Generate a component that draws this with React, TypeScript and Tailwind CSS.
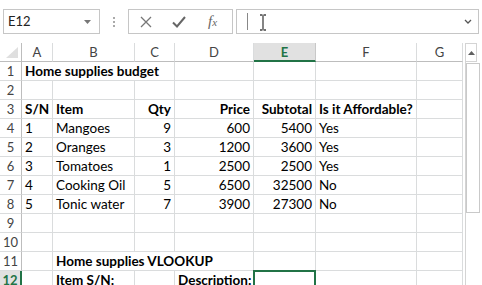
import type { ReactNode } from "react";

type CellDef = {
  text?: string;
  right?: boolean;
  bold?: boolean;
  span?: number;
  selected?: boolean;
};

const columns = ["A", "B", "C", "D", "E", "F", "G"];

const rows: CellDef[][] = [
  [{ text: "Home supplies budget", bold: true, span: 3 }, {}, {}, {}, {}],
  [{}, {}, {}, {}, {}, {}, {}],
  [
    { text: "S/N", bold: true },
    { text: "Item", bold: true },
    { text: "Qty", bold: true, right: true },
    { text: "Price", bold: true, right: true },
    { text: "Subtotal", bold: true, right: true },
    { text: "Is it Affordable?", bold: true },
    {},
  ],
  [{ text: "1" }, { text: "Mangoes" }, { text: "9", right: true }, { text: "600", right: true }, { text: "5400", right: true }, { text: "Yes" }, {}],
  [{ text: "2" }, { text: "Oranges" }, { text: "3", right: true }, { text: "1200", right: true }, { text: "3600", right: true }, { text: "Yes" }, {}],
  [{ text: "3" }, { text: "Tomatoes" }, { text: "1", right: true }, { text: "2500", right: true }, { text: "2500", right: true }, { text: "Yes" }, {}],
  [{ text: "4" }, { text: "Cooking Oil" }, { text: "5", right: true }, { text: "6500", right: true }, { text: "32500", right: true }, { text: "No" }, {}],
  [{ text: "5" }, { text: "Tonic water" }, { text: "7", right: true }, { text: "3900", right: true }, { text: "27300", right: true }, { text: "No" }, {}],
  [{}, {}, {}, {}, {}, {}, {}],
  [{}, {}, {}, {}, {}, {}, {}],
  [{}, { text: "Home supplies VLOOKUP", bold: true, span: 3 }, {}, {}, {}],
  [{}, { text: "Item S/N:", bold: true }, {}, { text: "Description:", bold: true }, { selected: true }, {}, {}],
];

function Cell({ cell }: { cell: CellDef }) {
  const span = cell.span === 3 ? "col-span-3" : "";
  return (
    <div
      className={`relative h-[19px] border-r border-b border-[#dadcdd] whitespace-nowrap leading-[18px] ${span} ${
        cell.right ? "text-right pr-[3px]" : "pl-[3px]"
      } ${cell.bold ? "font-bold" : ""}`}
    >
      {cell.text}
      {cell.selected && <div className="absolute -left-px -top-px right-[-1px] bottom-0 border-2 border-[#217346]" />}
    </div>
  );
}

function Box({ className, children }: { className: string; children?: ReactNode }) {
  return <div className={`h-[25px] border border-[#c6c6c6] bg-white flex items-center ${className}`}>{children}</div>;
}

export default function App() {
  return (
    <div className="w-[482px] h-[285px] overflow-hidden bg-white text-[#000] font-['Lato',sans-serif] text-[13.5px]">
      {/* formula bar */}
      <div className="h-[43px] flex items-start pt-[9px] pl-[3px]">
        <Box className="w-[97px] pl-[4px] pr-[8px] justify-between text-[13px] text-[#222]">
          <span>E12</span>
          <svg width="7" height="4" viewBox="0 0 7 4">
            <path d="M0 0h7L3.5 4z" fill="#777" />
          </svg>
        </Box>
        <div className="w-[28px] h-[25px] flex flex-col items-center justify-center gap-[2px]">
          <span className="w-[2px] h-[2px] bg-[#aaa]" />
          <span className="w-[2px] h-[2px] bg-[#aaa]" />
          <span className="w-[2px] h-[2px] bg-[#aaa]" />
        </div>
        <Box className="w-[105px] pl-[11px] gap-[20px]">
          <svg width="12" height="12" viewBox="0 0 12 12">
            <path d="M1 1l10 10M11 1L1 11" stroke="#777" strokeWidth="1.3" />
          </svg>
          <svg width="14" height="12" viewBox="0 0 14 12">
            <path d="M1 6.5l4 4L13 1" stroke="#666" strokeWidth="2" fill="none" />
          </svg>
          <span className="font-['Liberation_Serif',serif] italic text-[15px] text-[#666] ml-[2px]">
            f<span className="text-[11px]">x</span>
          </span>
        </Box>
        <Box className="ml-[3px] w-[243px] relative">
          <div className="absolute left-[10px] top-[3px] w-px h-[17px] bg-[#888]" />
          <svg className="absolute left-[22px] top-[4px]" width="8" height="17" viewBox="0 0 8 17">
            <path d="M1 1h2.5M4.5 1H7M4 1.5v14M1 16h2.5M4.5 16H7" stroke="#444" strokeWidth="1.3" fill="none" />
          </svg>
          <svg className="absolute right-[6px] top-[9px]" width="8" height="5" viewBox="0 0 8 5">
            <path d="M1 1l3 3 3-3" stroke="#555" strokeWidth="1.3" fill="none" />
          </svg>
        </Box>
      </div>

      <div className="flex">
        {/* sheet grid */}
        <div className="grid grid-cols-[22px_31px_82px_40px_79px_62px_101px_46px] w-[463px]">
          <div className="h-[19px] border-r border-b border-[#bdbdbd] relative">
            <svg className="absolute left-[6px] top-[4px]" width="12" height="11" viewBox="0 0 12 11">
              <path d="M12 0v11H0z" fill="#dfdfdf" />
            </svg>
          </div>
          {columns.map((c) =>
            c === "E" ? (
              <div
                key={c}
                className="h-[19px] bg-[#e1e1e1] border-r border-[#c8c8c8] border-b-2 border-b-[#217346] text-center text-[13px] font-bold text-[#217346] leading-[18px]"
              >
                {c}
              </div>
            ) : (
              <div key={c} className="h-[19px] border-r border-[#dadcdd] border-b border-b-[#bdbdbd] text-center text-[13px] text-[#444] leading-[18px]">
                {c}
              </div>
            )
          )}
          {rows.map((row, i) => [
            <div
              key={`h${i}`}
              className={`h-[19px] border-b border-[#dadcdd] text-center text-[13px] leading-[18px] ${
                i === 11 ? "bg-[#e1e1e1] text-[#217346] font-bold border-r-2 border-r-[#217346]" : "text-[#444] border-r border-r-[#bdbdbd]"
              }`}
            >
              {i + 1}
            </div>,
            ...row.map((cell, j) => <Cell key={`${i}-${j}`} cell={cell} />),
          ])}
        </div>

        {/* vertical scrollbar */}
        <div className="ml-[2px] w-[15px] flex flex-col">
          <div className="h-[19px] w-[12px] border border-[#d4d4d4] flex items-center justify-center">
            <svg width="7" height="4" viewBox="0 0 7 4">
              <path d="M0 4h7L3.5 0z" fill="#606060" />
            </svg>
          </div>
          <div className="flex-1 border-l border-[#d4d4d4]">
            <div className="mt-[1px] w-[14px] h-[150px] border border-[#c9c9c9] bg-white" />
          </div>
        </div>
      </div>
    </div>
  );
}
